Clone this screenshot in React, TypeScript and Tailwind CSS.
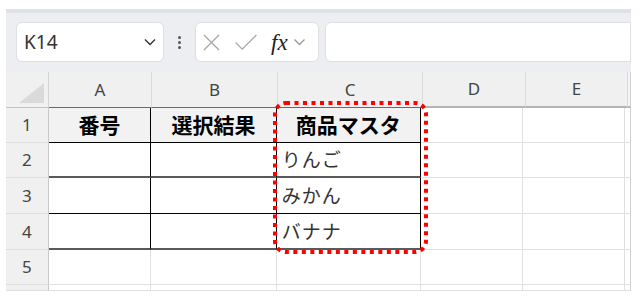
import React from 'react';

const COL_WIDTHS = [43, 103, 126, 145, 103, 102, 3];
const COL_LABELS = ['', 'A', 'B', 'C', 'D', 'E', ''];
const ROW_HEIGHTS = [35, 35, 36, 36, 35, 6];

const ROWS: string[][] = [
  ['番号', '選択結果', '商品マスタ'],
  ['', '', 'りんご'],
  ['', '', 'みかん'],
  ['', '', 'バナナ'],
  ['', '', ''],
  ['', '', ''],
];

const uiFont = { fontFamily: '"Noto Sans", "Liberation Sans", sans-serif' };
const jpFont = { fontFamily: '"Noto Sans CJK JP", "Noto Sans", sans-serif' };

const Chevron: React.FC<{ className?: string }> = ({ className }) => (
  <svg viewBox="0 0 12 8" className={className} fill="none" stroke="currentColor" strokeWidth="1.4">
    <polyline points="1,1.5 6,6.5 11,1.5" />
  </svg>
);

const Toolbar: React.FC = () => (
  <div className="h-[63px] bg-[#eceef1]">
    <div className="h-[4px] bg-[#dfe2e6]" />
    <div className="flex items-center pl-[10px] pt-[9px]">
      <div className="flex h-[40px] w-[148px] items-center justify-between rounded-[6px] border border-[#dcdfe4] bg-white pl-[7px] pr-[7px]">
        <span className="text-[19px] text-[#333]" style={uiFont}>K14</span>
        <Chevron className="h-[8px] w-[12px] text-[#333]" />
      </div>
      <div className="ml-[13px] flex w-[5px] flex-col items-center gap-[2px]">
        <span className="h-[3px] w-[3px] rounded-full bg-[#555]" />
        <span className="h-[3px] w-[3px] rounded-full bg-[#555]" />
        <span className="h-[3px] w-[3px] rounded-full bg-[#555]" />
      </div>
      <div className="ml-[13px] flex h-[40px] w-[124px] items-center rounded-[6px] border border-[#dcdfe4] bg-white pl-[7px]">
        <svg viewBox="0 0 18 18" className="h-[17px] w-[17px]" fill="none" stroke="#a6a6a6" strokeWidth="1.3">
          <line x1="1" y1="1" x2="17" y2="17" />
          <line x1="17" y1="1" x2="1" y2="17" />
        </svg>
        <svg viewBox="0 0 24 18" className="ml-[14px] h-[17px] w-[24px]" fill="none" stroke="#a6a6a6" strokeWidth="1.3">
          <polyline points="1,9 8,16 23,1" />
        </svg>
        <span
          className="ml-[13px] text-[23px] italic leading-none text-[#222]"
          style={{ fontFamily: '"Liberation Serif", "DejaVu Serif", serif' }}
        >
          fx
        </span>
        <Chevron className="ml-[5px] h-[8px] w-[13px] text-[#9a9a9a]" />
      </div>
      <div className="ml-[6px] h-[40px] flex-1 rounded-l-[6px] border border-[#dcdfe4] bg-white" />
    </div>
  </div>
);

const HeaderRow: React.FC = () => (
  <div className="flex h-[36px]">
    {COL_WIDTHS.map((w, c) => {
      if (c === 0) {
        return (
          <div key={c} className="box-border flex h-full items-end justify-end border-r border-b border-r-[#d4d4d4] border-b-[#c4c4c4] bg-[#f0f0f0] pb-[4px] pr-[4px]" style={{ width: w }}>
            <svg viewBox="0 0 25 20" className="h-[20px] w-[25px]">
              <polygon points="25,0 25,20 0,20" fill="#dadada" />
            </svg>
          </div>
        );
      }
      const dark = c >= 1 && c <= 3;
      return (
        <div
          key={c}
          className={`box-border flex h-full items-center justify-center border-r bg-[#f0f0f0] text-[17px] text-[#444] ${dark ? 'border-b border-b-[#6a6a6a]' : 'border-b-2 border-b-[#b4b4b4]'} ${c === 6 ? 'border-r-[#d0d0d0] bg-[#f4f4f4]' : 'border-r-[#dadada]'}`}
          style={{ width: w, ...uiFont }}
        >
          {COL_LABELS[c]}
        </div>
      );
    })}
  </div>
);

const App: React.FC = () => {
  return (
    <div className="relative h-[302px] w-[641px] overflow-hidden bg-white pl-[6px] pt-[9px]">
      <div className="w-[625px]">
        <Toolbar />
        <HeaderRow />
        {ROWS.map((row, r) => (
          <div key={r} className="flex" style={{ height: ROW_HEIGHTS[r] }}>
            {COL_WIDTHS.map((w, c) => {
              if (c === 0) {
                return (
                  <div
                    key={c}
                    className="box-border flex h-full items-center justify-center border-r border-b border-r-[#c8c8c8] border-b-[#dedede] bg-[#f0f0f0] text-[17px] text-[#444]"
                    style={{ width: w, ...uiFont }}
                  >
                    {r < 5 ? r + 1 : ''}
                  </div>
                );
              }
              const inTable = r <= 3 && c <= 3;
              const thick = inTable && (r === 1 || r === 3);
              const text = c <= 3 ? row[c - 1] : '';
              const isHead = r === 0 && inTable;
              let cls = 'box-border flex h-full items-center border-r ';
              cls += inTable ? 'border-r-black ' : c === 6 ? 'border-r-[#d0d0d0] ' : 'border-r-[#e0e0e0] ';
              cls += thick ? 'border-b-2 border-b-[#5a5a5a] ' : inTable ? 'border-b border-b-black ' : 'border-b border-b-[#e0e0e0] ';
              cls += isHead ? 'justify-center bg-[#f2f2f2] text-[21px] font-bold text-black' : 'pl-[5px] text-[19px] tracking-[1px] text-[#333]';
              return (
                <div key={c} className={cls} style={{ width: w, ...jpFont }}>
                  {text}
                </div>
              );
            })}
          </div>
        ))}
      </div>
      <svg className="pointer-events-none absolute left-[271px] top-[99px]" width="159" height="157" viewBox="0 0 159 157">
        <rect x="4" y="4" width="151" height="149" rx="11" fill="none" stroke="#ff0000" strokeWidth="4" strokeDasharray="4 4.5" />
      </svg>
    </div>
  );
};

export default App;
